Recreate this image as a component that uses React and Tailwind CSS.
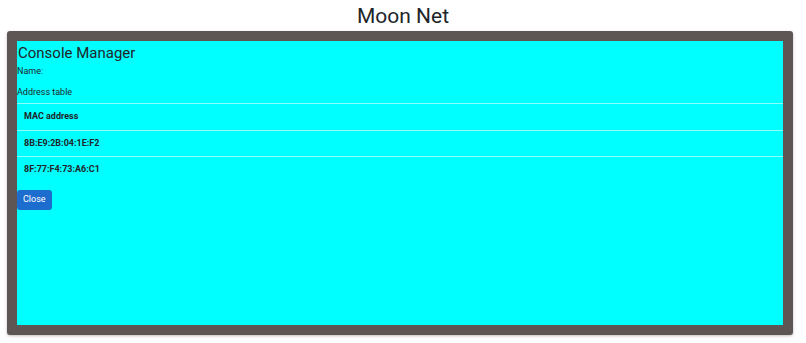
import React from 'react';

const MACS = ['8B:E9:2B:04:1E:F2', '8F:77:F4:73:A6:C1'];

export default function App() {
    return (
        <div className="w-[806px] h-[343px] bg-white text-[#212529] font-['Roboto','Liberation_Sans',Arial,sans-serif]">
            <h1 className="h-[31px] pt-[2px] text-center text-[21px] leading-[28px]">Moon Net</h1>
            <div className="ml-[7px] w-[786px] h-[304px] p-[10px] bg-[#5e5654] rounded-[3px] shadow-[0_1px_3px_rgba(0,0,0,0.25)]">
                <div className="h-full bg-[#00ffff] flex flex-col items-start">
                    <h2 className="text-[15px] leading-[20px] pt-[2px] pl-[1px]">Console Manager</h2>
                    <p className="text-[9px] leading-[11px] mt-[3px]">Name:</p>
                    <p className="text-[9px] leading-[11px] mt-[10px] mb-[5px]">Address table</p>
                    <table className="w-full text-[9px] font-bold">
                        <tbody>
                            <tr className="border-t border-[#8fffff]">
                                <td className="h-[26.5px] pl-[7px]">MAC address</td>
                            </tr>
                            {MACS.map((mac) => (
                                <tr key={mac} className="border-t border-[#8fffff]">
                                    <td className="h-[26.5px] pl-[7px]">{mac}</td>
                                </tr>
                            ))}
                        </tbody>
                    </table>
                    <button className="mt-[7px] h-[20px] px-[6px] bg-[#1d6dcf] text-white text-[9px] rounded-[3px]">
                        Close
                    </button>
                </div>
            </div>
        </div>
    );
}
